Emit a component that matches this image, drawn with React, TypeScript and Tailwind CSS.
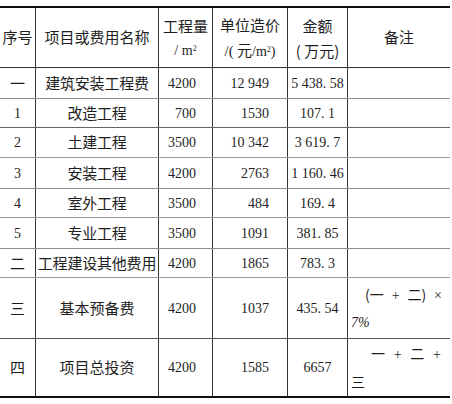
const cjk = "font-['Noto_Sans_CJK_SC',sans-serif]";
const num = "font-['Liberation_Serif','Noto_Sans_CJK_SC',serif]";

const cols = "grid grid-cols-[36px_123px_54px_75px_60px_102px]";

type Row = {
  no: string;
  noCjk: boolean;
  name: string;
  qty: string;
  price: string;
  amount: string;
  h: string;
  line: string;
};

const rows: Row[] = [
  { no: "一", noCjk: true, name: "建筑安装工程费", qty: "4200", price: "12 949", amount: "5 438. 58", h: "h-[31px]", line: "border-[#8f8f8f]" },
  { no: "1", noCjk: false, name: "改造工程", qty: "700", price: "1530", amount: "107. 1", h: "h-[29px]", line: "border-[#666]" },
  { no: "2", noCjk: false, name: "土建工程", qty: "3500", price: "10 342", amount: "3 619. 7", h: "h-[30px]", line: "border-[#999]" },
  { no: "3", noCjk: false, name: "安装工程", qty: "4200", price: "2763", amount: "1 160. 46", h: "h-[31px]", line: "border-[#8f8f8f]" },
  { no: "4", noCjk: false, name: "室外工程", qty: "3500", price: "484", amount: "169. 4", h: "h-[29px]", line: "border-[#999]" },
  { no: "5", noCjk: false, name: "专业工程", qty: "3500", price: "1091", amount: "381. 85", h: "h-[31px]", line: "border-[#8f8f8f]" },
  { no: "二", noCjk: true, name: "工程建设其他费用", qty: "4200", price: "1865", amount: "783. 3", h: "h-[29px]", line: "border-[#999]" },
];

const vline = "border-r border-[#333]";

function Remark({ first, second, pl, pr }: { first: string[]; second: React.ReactNode; pl: string; pr: string }) {
  return (
    <div className="flex h-full flex-col justify-center gap-[6px]">
      <div className={`flex items-baseline justify-between ${pl} ${pr} leading-[21px]`}>
        {first.map((p, i) => (
          <span key={i} className={p === "+" || p === "×" ? `${num} text-[14px]` : cjk}>
            {p}
          </span>
        ))}
      </div>
      <div className="pl-[3px] leading-[21px]">{second}</div>
    </div>
  );
}

export default function App() {
  return (
    <div className="h-[404px] w-[452px] bg-white pt-[6px] text-[15px] text-[#1e1e1e]">
      <div className="w-[450px] border-t-2 border-[#111]">
        {/* header */}
        <div className={`${cols} h-[60px] border-b border-[#333] ${cjk}`}>
          <div className={`${vline} flex items-center justify-center`}>序号</div>
          <div className={`${vline} flex items-center justify-center`}>项目或费用名称</div>
          <div className={`${vline} flex flex-col items-center justify-center leading-[25px]`}>
            <span>工程量</span>
            <span className={`${num} text-[14px]`}>
              / m<sup className="text-[8px]">2</sup>
            </span>
          </div>
          <div className={`${vline} flex flex-col items-center justify-center leading-[25px]`}>
            <span>单位造价</span>
            <span>
              <span className={num}>/(</span> 元<span className={`${num} text-[14px]`}>/m<sup className="text-[8px]">2</sup>)</span>
            </span>
          </div>
          <div className={`${vline} flex flex-col items-center justify-center leading-[25px]`}>
            <span>金额</span>
            <span>( 万元)</span>
          </div>
          <div className="flex items-center justify-center">备注</div>
        </div>

        {rows.map((r) => (
          <div key={r.name} className={`${cols} ${r.h} border-b ${r.line} ${num} text-[14px]`}>
            <div className={`${vline} flex items-center justify-center ${r.noCjk ? `${cjk} text-[15px]` : ""}`}>{r.no}</div>
            <div className={`${vline} flex items-center justify-center ${cjk} text-[15px] tracking-[-0.2px]`}>{r.name}</div>
            <div className={`${vline} flex items-center justify-end pr-[16px]`}>{r.qty}</div>
            <div className={`${vline} flex items-center justify-end pr-[18px]`}>{r.price}</div>
            <div className={`${vline} flex items-center justify-center whitespace-pre`}>{r.amount}</div>
            <div />
          </div>
        ))}

        <div className={`${cols} h-[61px] border-b border-[#555] ${num} text-[14px]`}>
          <div className={`${vline} flex items-center justify-center ${cjk} text-[15px]`}>三</div>
          <div className={`${vline} flex items-center justify-center ${cjk} text-[15px]`}>基本预备费</div>
          <div className={`${vline} flex items-center justify-end pr-[16px]`}>4200</div>
          <div className={`${vline} flex items-center justify-end pr-[18px]`}>1037</div>
          <div className={`${vline} flex items-center justify-center`}>435. 54</div>
          <Remark
            first={["(一", "+", "二)", "×"]}
            second={<span className={`${num} italic text-[14px]`}>7%</span>}
            pl="pl-[17px]"
            pr="pr-[8px]"
          />
        </div>

        <div className={`${cols} h-[59px] border-b-2 border-[#111] ${num} text-[14px]`}>
          <div className={`${vline} flex items-center justify-center ${cjk} text-[15px]`}>四</div>
          <div className={`${vline} flex items-center justify-center ${cjk} text-[15px]`}>项目总投资</div>
          <div className={`${vline} flex items-center justify-end pr-[16px]`}>4200</div>
          <div className={`${vline} flex items-center justify-end pr-[18px]`}>1585</div>
          <div className={`${vline} flex items-center justify-center`}>6657</div>
          <Remark
            first={["一", "+", "二", "+"]}
            second={<span className={cjk}>三</span>}
            pl="pl-[23px]"
            pr="pr-[9px]"
          />
        </div>
      </div>
    </div>
  );
}
